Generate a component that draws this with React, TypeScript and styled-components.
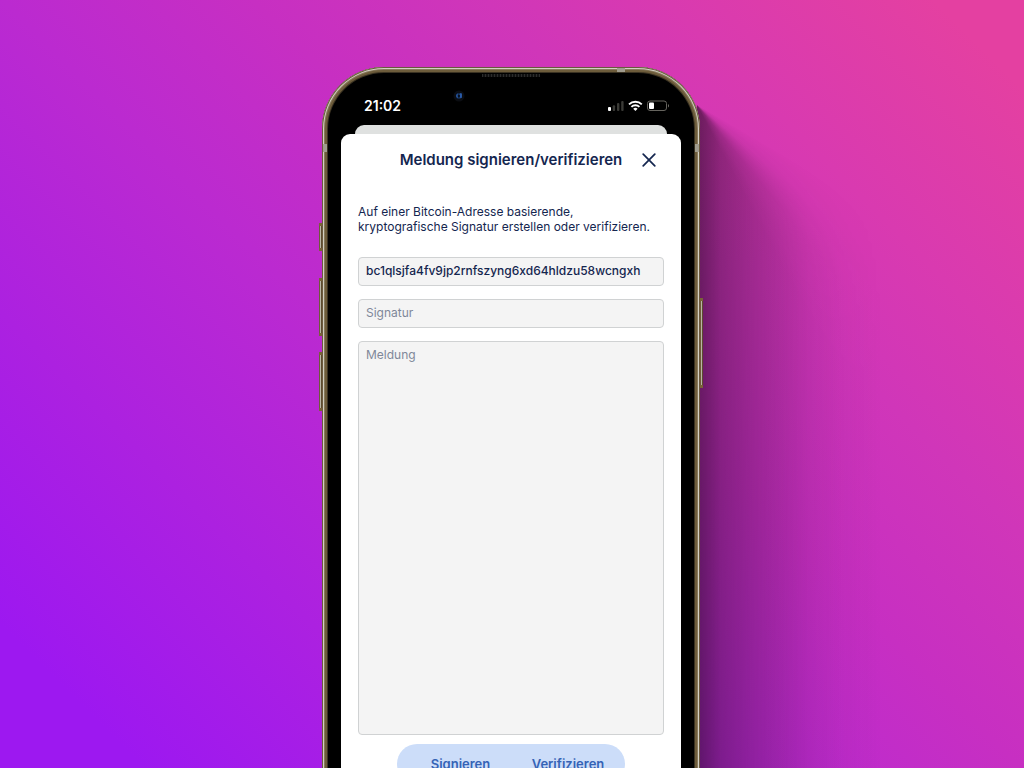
import React, { useState } from 'react';
import styled, { createGlobalStyle } from 'styled-components';

const GlobalStyle = createGlobalStyle`
  *, *::before, *::after { box-sizing: border-box; }
  body { margin: 0; font-family: Inter, "Liberation Sans", sans-serif; color: #14264f; }
`;

const Scene = styled.main`
  position: relative;
  display: flex;
  justify-content: center;
  align-items: flex-start;
  height: 100vh;
  padding: 67px 2px 0 0;
  overflow: hidden;
  background: linear-gradient(45deg, #9d18f0 0%, #9d18f0 8%, #bb2ad0 43%, #c72fc2 57%, #d036b9 70%, #d93ab0 80%, #e440a1 95%, #e440a1 100%);
`;

const Device = styled.div`
  position: relative;
  display: flex;
`;

const Shadow = styled.div`
  position: absolute;
  left: calc(100% - 6px);
  top: 38px;
  width: 220px;
  height: 100vh;
  background: linear-gradient(
    to right,
    rgba(30, 8, 30, 0.58) 0,
    rgba(30, 8, 30, 0.52) 8px,
    rgba(30, 8, 30, 0.38) 24px,
    rgba(30, 8, 30, 0.29) 50px,
    rgba(30, 8, 30, 0.2) 80px,
    rgba(30, 8, 30, 0.1) 112px,
    rgba(30, 8, 30, 0.04) 145px,
    transparent 185px
  );
  mask-image: conic-gradient(at 0 0, transparent 120deg, rgba(0, 0, 0, 0.2) 130deg, rgba(0, 0, 0, 0.75) 141deg, #000 152deg, #000 200deg, transparent 200deg);
`;

const Rail = styled.div`
  position: relative;
  width: 3px;
  display: flex;
  flex-direction: column;
`;

const Key = styled.span<{ $gap: number; $length: number }>`
  height: ${(p) => p.$length}px;
  margin-top: ${(p) => p.$gap}px;
  background: linear-gradient(to right, #6f5a3a 1px, #b9b4a4 1px, #b9b4a4 2px, #5d4c30 2px);
  border-top: 3px solid #796238;
  border-bottom: 3px solid #796238;
`;

const Phone = styled.section`
  position: relative;
  width: 378px;
  padding: 0 19px;
  border-radius: 62px 62px 0 0;
  background: #000;
  box-shadow:
    inset 0 0 0 1px #6c5a3e,
    inset 0 0 0 2px #d2cfc2,
    inset 0 0 0 3px #887a5c,
    inset 0 0 0 5px #6d5c3b,
    inset 0 0 0 6px #3a3222;
`;

const Band = styled.span<{ $side: 'left' | 'right' | 'top' }>`
  position: absolute;
  background: #a09c8e;
  ${(p) =>
    p.$side === 'top'
      ? 'top: 1px; right: 75px; width: 8px; height: 4px;'
      : `top: 77px; ${p.$side}: 1px; width: 4px; height: 8px;`}
`;

const Speaker = styled.span`
  position: absolute;
  top: 7px;
  left: 50%;
  width: 58px;
  height: 3px;
  margin-left: -29px;
  background: repeating-linear-gradient(to right, #2c2c2c 0, #2c2c2c 1px, #111 1px, #111 3px);
`;

const Camera = styled.svg`
  position: absolute;
  top: 22px;
  left: 130px;
`;

const StatusBar = styled.header`
  display: flex;
  justify-content: space-between;
  align-items: center;
  height: 58px;
  padding: 20px 11px 0 23px;
  color: #fff;
`;

const Clock = styled.time`
  font-size: 14px;
  line-height: 16px;
  font-weight: 600;
`;

const BackSheet = styled.div`
  height: 9px;
  margin: 0 14px;
  border-radius: 9px 9px 0 0;
  background: #dfe1e0;
`;

const Sheet = styled.form`
  padding: 0 17px 40px;
  border-radius: 9px 9px 0 0;
  background: #fff;
`;

const TitleBar = styled.div`
  display: grid;
  grid-template-columns: 30px 1fr 30px;
  align-items: center;
  height: 51px;
`;

const Title = styled.h1`
  grid-column: 2;
  margin: 0;
  font-size: 15px;
  line-height: 20px;
  font-weight: 600;
  text-align: center;
  white-space: nowrap;
`;

const Close = styled.button`
  display: grid;
  place-items: center;
  width: 30px;
  height: 30px;
  padding: 0;
  border: 0;
  background: none;
  color: inherit;
`;

const Intro = styled.p`
  margin: 19px 0 23px;
  font-size: 12px;
  line-height: 15px;
  white-space: nowrap;
`;

const Fields = styled.div`
  display: flex;
  flex-direction: column;
  gap: 13px;
`;

const fieldStyle = `
  display: block;
  width: 100%;
  margin: 0;
  border: 1px solid #d0d2d3;
  border-radius: 4px;
  background: #f4f4f4;
  color: #14264f;
  font-family: inherit;
  font-size: 12px;
  line-height: 16px;
  outline: 0;
  &::placeholder { color: #7f8899; opacity: 1; font-weight: 400; }
`;

const TextField = styled.input`
  ${fieldStyle}
  height: 29px;
  padding: 0 7px 3px;
  font-weight: 500;
`;

const MessageField = styled.textarea`
  ${fieldStyle}
  height: 394px;
  padding: 5px 7px;
  resize: none;
`;

const Actions = styled.div`
  display: flex;
  width: 228px;
  height: 40px;
  margin: 9px auto 0;
  padding-left: 13px;
  border-radius: 20px;
  background: #ccddf9;
`;

const Action = styled.button`
  flex: 1 1 auto;
  padding: 0;
  border: 0;
  background: none;
  color: #3563b5;
  font-family: inherit;
  font-size: 13px;
  line-height: 16px;
  font-weight: 600;
`;

const StatusIcons = () => (
  <svg width="62" height="12" viewBox="0 0 62 12" aria-hidden="true">
    <rect x="0" y="7" width="3" height="4" rx="1" fill="#fff" />
    <rect x="4.7" y="5.2" width="2.4" height="5.8" rx="1" fill="#3a3a36" />
    <rect x="9" y="3" width="2.4" height="8" rx="1" fill="#3a3a36" />
    <rect x="13.2" y="1" width="2.4" height="10" rx="1" fill="#3a3a36" />
    <g fill="none" stroke="#fff" strokeWidth="1.9">
      <path d="M21 4.4a9.2 9.2 0 0 1 12.800 0" />
      <path d="M23.400 6.900a5.800 5.800 0 0 1 8 0" />
    </g>
    <path d="M25.200 8.700a3.200 3.200 0 0 1 4.400 0l-2.200 2.300z" fill="#fff" />
    <rect x="39.500" y="1" width="19" height="9.500" rx="2.500" fill="none" stroke="#66645e" />
    <rect x="41" y="2.500" width="5" height="6.500" rx="1" fill="#fff" />
    <path d="M60 4v3.500c1.300-.5 1.300-3 0-3.500z" fill="#77746d" />
  </svg>
);

export default function App() {
  const [address, setAddress] = useState('bc1qlsjfa4fv9jp2rnfszyng6xd64hldzu58wcngxh');
  return (
    <>
      <GlobalStyle />
      <Scene>
        <Device>
          <Shadow />
          <Rail>
            <Key $gap={156} $length={28} />
            <Key $gap={27} $length={58} />
            <Key $gap={16} $length={59} />
          </Rail>
          <Phone>
            <Band $side="left" />
            <Band $side="top" />
            <Band $side="right" />
            <Speaker />
            <Camera width="14" height="14" viewBox="0 0 14 14" aria-hidden="true">
              <circle cx="7" cy="7" r="5.500" fill="#0b0d12" />
              <circle cx="7" cy="7" r="3" fill="#10284e" />
              <path d="M5.500 4.700a3 3 0 0 0 0 4.200M8 4.700h1.500v3.800H8z" stroke="#2b5ca8" fill="#2b5ca8" strokeWidth=".8" />
              <circle cx="7" cy="7" r="1" fill="#05070c" />
            </Camera>
            <StatusBar>
              <Clock>21:02</Clock>
              <StatusIcons />
            </StatusBar>
            <BackSheet />
            <Sheet onSubmit={(e) => e.preventDefault()}>
              <TitleBar>
                <Title>Meldung signieren/verifizieren</Title>
                <Close type="button" aria-label="Schließen">
                  <svg width="14" height="14" viewBox="0 0 14 14" aria-hidden="true">
                    <path d="M1.200 1.200l11.600 11.600M12.800 1.200L1.200 12.800" stroke="currentColor" strokeWidth="1.700" strokeLinecap="round" />
                  </svg>
                </Close>
              </TitleBar>
              <Intro>
                Auf einer Bitcoin-Adresse basierende,
                <br />
                kryptografische Signatur erstellen oder verifizieren.
              </Intro>
              <Fields>
                <TextField aria-label="Adresse" value={address} spellCheck={false} onChange={(e) => setAddress(e.target.value)} />
                <TextField aria-label="Signatur" placeholder="Signatur" />
                <MessageField aria-label="Meldung" placeholder="Meldung" />
              </Fields>
              <Actions>
                <Action type="button">Signieren</Action>
                <Action type="button">Verifizieren</Action>
              </Actions>
            </Sheet>
          </Phone>
          <Rail>
            <Key $gap={231} $length={90} />
          </Rail>
        </Device>
      </Scene>
    </>
  );
}
